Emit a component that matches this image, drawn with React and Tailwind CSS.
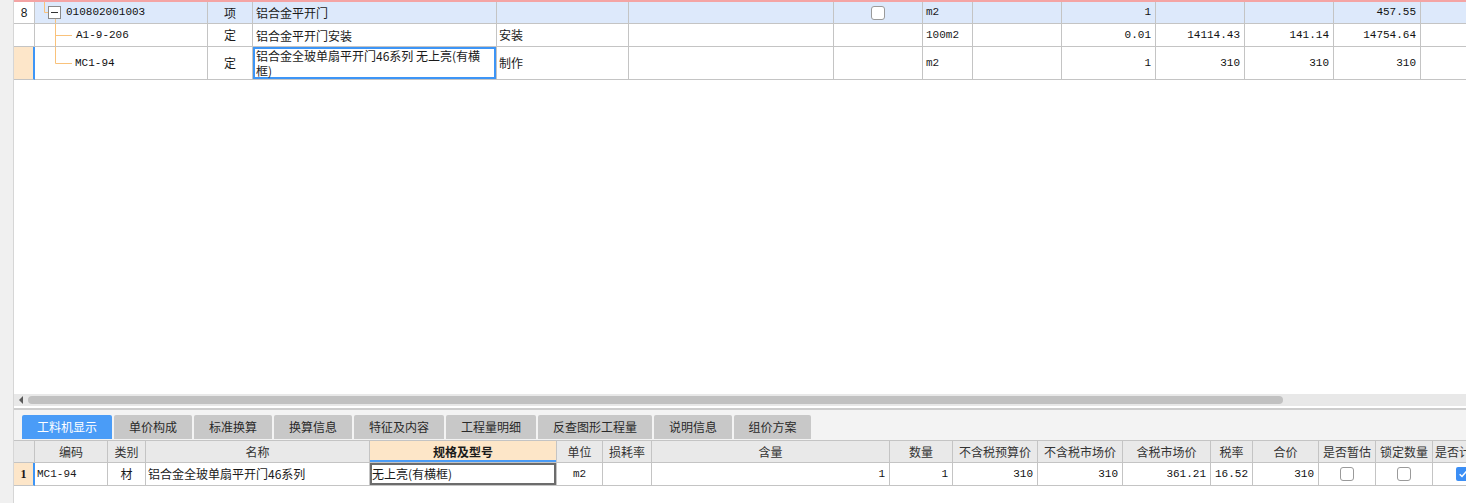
import React from "react";

const CJK = "font-['Noto_Sans_CJK_SC',sans-serif]";
const MONO = "font-['Liberation_Mono','Noto_Sans_CJK_SC',monospace]";

const TOP_COLS =
    "grid-cols-[21px_173px_45px_244px_132px_205px_89px_50px_89px_94px_89px_89px_87px_1fr]";
const BOTTOM_COLS =
    "grid-cols-[21px_73px_38px_224px_187px_46px_49px_238px_63px_85px_85px_88px_42px_66px_57px_57px_80px]";

const TABS = [
    { label: "工料机显示", w: "w-[90px]", active: true },
    { label: "单价构成", w: "w-[78px]" },
    { label: "标准换算", w: "w-[78px]" },
    { label: "换算信息", w: "w-[78px]" },
    { label: "特征及内容", w: "w-[90px]" },
    { label: "工程量明细", w: "w-[90px]" },
    { label: "反查图形工程量", w: "w-[114px]" },
    { label: "说明信息", w: "w-[78px]" },
    { label: "组价方案", w: "w-[77px]" },
];

const BOTTOM_HEAD = [
    "", "编码", "类别", "名称", "规格及型号", "单位", "损耗率", "含量", "数量",
    "不含税预算价", "不含税市场价", "含税市场价", "税率", "合价", "是否暂估", "锁定数量", "是否计价",
];

// ── Small pieces ─────────────────────────────────────────────────────────

function Cell({ className = "", children }) {
    return (
        <div className={`flex items-center overflow-hidden border-r border-b border-[#c4c4c4] ${className}`}>
            {children}
        </div>
    );
}

function CheckBox({ checked = false }) {
    if (checked) {
        return (
            <span className="flex h-[14px] w-[14px] items-center justify-center rounded-[2px] bg-[#3b8ef5]">
                <svg viewBox="0 0 12 12" className="h-[10px] w-[10px]">
                    <path d="M2 6.2 L4.8 9 L10 3" fill="none" stroke="white" strokeWidth="1.8" />
                </svg>
            </span>
        );
    }
    return <span className="h-[14px] w-[14px] rounded-[3px] border border-[#9a9a9a] bg-white" />;
}

// tree connector lines for the code column
function TreeLines({ kind }) {
    const c = "#f9c27b";
    if (kind === "root") {
        return (
            <svg className="absolute inset-0 h-full w-full" width="173" height="22">
                <line x1="9.5" y1="0" x2="9.5" y2="10.5" stroke={c} />
                <line x1="9.5" y1="10.5" x2="13" y2="10.5" stroke={c} />
                <line x1="20.5" y1="17" x2="20.5" y2="22" stroke={c} />
                <rect x="13.5" y="4.5" width="12" height="12" fill="white" stroke="#8a8a8a" />
                <line x1="16" y1="10.5" x2="23" y2="10.5" stroke="#333" />
            </svg>
        );
    }
    if (kind === "mid") {
        return (
            <svg className="absolute inset-0 h-full w-full" width="173" height="23">
                <line x1="20.5" y1="0" x2="20.5" y2="23" stroke={c} />
                <line x1="20.5" y1="11.5" x2="37" y2="11.5" stroke={c} />
            </svg>
        );
    }
    return (
        <svg className="absolute inset-0 h-full w-full" width="173" height="33">
            <line x1="20.5" y1="0" x2="20.5" y2="16.5" stroke={c} />
            <line x1="20.5" y1="16.5" x2="37" y2="16.5" stroke={c} />
        </svg>
    );
}

function Num({ children, className = "" }) {
    return (
        <Cell className={`justify-end pr-[4px] ${MONO} text-[11px] text-[#111] ${className}`}>
            {children}
        </Cell>
    );
}

// ── Top grid rows ───────────────────────────────────────────────────────

function TopRow({ row }) {
    const bg = row.active ? "bg-[#dde9fb]" : "bg-white";
    return (
        <div className={`grid ${TOP_COLS} ${row.height}`}>
            <Cell
                className={`justify-center text-[12px] font-['Liberation_Sans',sans-serif] ${
                    row.current ? "bg-[#fde6c9] border-r-2 border-r-[#3d95f6]" : "bg-white"
                }`}
            >
                {row.no}
            </Cell>
            <Cell className={`relative ${bg} ${MONO} text-[11px] text-[#111]`}>
                <TreeLines kind={row.tree} />
                <span className={`relative ${row.indent}`}>{row.code}</span>
            </Cell>
            <Cell className={`justify-center ${bg} ${CJK} text-[12px]`}>{row.type}</Cell>
            <Cell
                className={`${bg} ${CJK} pl-[3px] text-[12px] leading-[15px] ${
                    row.current ? "shadow-[inset_0_0_0_2px_#3d95f6]" : ""
                }`}
            >
                <span>{row.name}</span>
            </Cell>
            <Cell className={`${bg} ${CJK} pl-[2px] text-[12px]`}>{row.work}</Cell>
            <Cell className={bg} />
            <Cell className={`justify-center ${bg}`}>{row.check && <CheckBox />}</Cell>
            <Cell className={`${bg} pl-[3px] ${MONO} text-[11px]`}>{row.unit}</Cell>
            <Cell className={bg} />
            <Num className={bg}>{row.qty}</Num>
            <Num className={bg}>{row.p1}</Num>
            <Num className={bg}>{row.p2}</Num>
            <Num className={bg}>{row.total}</Num>
            <Cell className={`${bg} border-r-0`} />
        </div>
    );
}

const TOP_ROWS = [
    {
        no: "8", code: "010802001003", tree: "root", indent: "pl-[31px]", type: "项",
        name: "铝合金平开门", work: "", check: true, unit: "m2", qty: "1", p1: "", p2: "",
        total: "457.55", active: true, height: "h-[22px]",
    },
    {
        no: "", code: "A1-9-206", tree: "mid", indent: "pl-[41px]", type: "定",
        name: "铝合金平开门安装", work: "安装", unit: "100m2", qty: "0.01", p1: "14114.43",
        p2: "141.14", total: "14754.64", height: "h-[23px]",
    },
    {
        no: "", code: "MC1-94", tree: "last", indent: "pl-[40px]", type: "定",
        name: (
            <>
                铝合金全玻单扇平开门46系列 无上亮(有横
                <br />
                框)
            </>
        ),
        work: "制作", unit: "m2", qty: "1", p1: "310", p2: "310", total: "310",
        current: true, height: "h-[33px]",
    },
];

// ── Page ─────────────────────────────────────────────────────────────────

export default function App() {
    return (
        <div className={`flex h-[503px] w-[1466px] overflow-hidden bg-white text-[#1a1a1a] ${CJK}`}>
            {/* left gutter */}
            <div className="w-[14px] shrink-0 border-r border-[#d6d6d6] bg-[#f0f0f0]" />

            <div className="flex min-w-0 flex-1 flex-col">
                {/* Upper grid */}
                <div className="h-[394px] shrink-0 bg-white">
                    <div className="h-[2px] bg-[#f4a4a4]" />
                    {TOP_ROWS.map((row, i) => (
                        <TopRow key={i} row={row} />
                    ))}
                </div>

                {/* Horizontal scrollbar */}
                <div className="flex h-[12px] shrink-0 items-center bg-[#e8e8e8] pl-[5px]">
                    <span className="h-0 w-0 border-y-[4px] border-r-[4px] border-y-transparent border-r-[#5a5a5a]" />
                    <span className="ml-[5px] h-[8px] w-[1255px] rounded-full bg-[#c1c1c1]" />
                </div>
                <div className="h-[2px] shrink-0 bg-white" />
                <div className="h-[2px] shrink-0 bg-[#cdcdcd]" />

                {/* Tabs */}
                <div className="flex h-[30px] shrink-0 items-start gap-[2px] bg-[#f3f3f3] pl-[8px] pt-[5px]">
                    {TABS.map(t => (
                        <div
                            key={t.label}
                            className={`${t.w} flex h-[24px] items-center justify-center rounded-t-[2px] text-[12px] ${
                                t.active ? "bg-[#4a9cf7] text-white" : "bg-[#c8c8c8] text-[#2a2a2a]"
                            }`}
                        >
                            {t.label}
                        </div>
                    ))}
                </div>

                {/* Lower grid */}
                <div className="shrink-0 overflow-hidden border-t border-[#c4c4c4]">
                    <div className={`grid ${BOTTOM_COLS} h-[22px] bg-[#e9e9e9]`}>
                        {BOTTOM_HEAD.map((h, i) => (
                            <Cell
                                key={i}
                                className={`whitespace-nowrap text-[12px] ${
                                    i === 4
                                        ? "bg-[#fde6c8] font-bold shadow-[inset_0_-2px_0_#4a9cf7]"
                                        : "text-[#333]"
                                } ${i === 16 ? "justify-start pl-[2px]" : "justify-center"}`}
                            >
                                {h}
                            </Cell>
                        ))}
                    </div>
                    <div className={`grid ${BOTTOM_COLS} h-[23px]`}>
                        <Cell className="justify-center border-r-2 border-r-[#3d95f6] bg-[#fde6c9] font-['Liberation_Serif',serif] text-[12px] font-bold">
                            1
                        </Cell>
                        <Cell className={`pl-[2px] ${MONO} text-[11px]`}>MC1-94</Cell>
                        <Cell className="justify-center text-[12px]">材</Cell>
                        <Cell className="pl-[2px] text-[12px]">铝合金全玻单扇平开门46系列</Cell>
                        <Cell className="pl-[2px] text-[12px] shadow-[inset_0_0_0_2px_#6c6c6c]">无上亮(有横框)</Cell>
                        <Cell className={`justify-center ${MONO} text-[11px]`}>m2</Cell>
                        <Cell />
                        <Num>1</Num>
                        <Num>1</Num>
                        <Num>310</Num>
                        <Num>310</Num>
                        <Num>361.21</Num>
                        <Num>16.52</Num>
                        <Num>310</Num>
                        <Cell className="justify-center">
                            <CheckBox />
                        </Cell>
                        <Cell className="justify-center">
                            <CheckBox />
                        </Cell>
                        <Cell className="justify-start pl-[23px]">
                            <CheckBox checked />
                        </Cell>
                    </div>
                </div>

                <div className="flex-1 bg-white" />
            </div>
        </div>
    );
}
